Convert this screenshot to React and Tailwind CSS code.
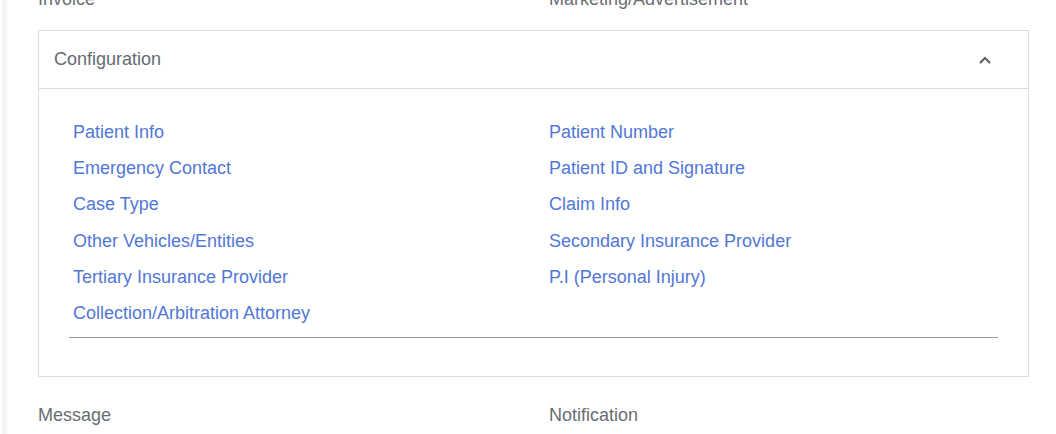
import React from "react";

const leftLinks = [
  "Patient Info",
  "Emergency Contact",
  "Case Type",
  "Other Vehicles/Entities",
  "Tertiary Insurance Provider",
  "Collection/Arbitration Attorney",
];

const rightLinks = [
  "Patient Number",
  "Patient ID and Signature",
  "Claim Info",
  "Secondary Insurance Provider",
  "P.I (Personal Injury)",
];

const App = () => {
  return (
    <div
      className="flex h-[434px] w-[1056px] overflow-hidden bg-white text-[18px]"
      style={{ fontFamily: '"Liberation Sans", Arial, sans-serif' }}
    >
      {/* left strip */}
      <div className="ml-[2px] w-[5px] shrink-0 bg-[#f4f4f6]" />

      <div className="flex-1 pl-[31px] pr-[27px]">
        {/* top labels */}
        <div className="-mt-[13px] grid h-[24px] grid-cols-[511px_1fr] leading-[24px] text-[#6a6d74]">
          <span>Invoice</span>
          <span>Marketing/Advertisement</span>
        </div>

        {/* Configuration accordion */}
        <div className="mt-[19px] border border-[#dedede]">
          <div className="flex h-[58px] items-center justify-between border-b border-[#dedede] pl-[15px] pr-[37px]">
            <span className="text-[#666a73]">Configuration</span>
            <svg width="12" height="8" viewBox="0 0 12 8" fill="none">
              <path
                d="M1.5 6.5 L6 2 L10.5 6.5"
                stroke="#5a5d64"
                strokeWidth="2"
                strokeLinecap="round"
              />
            </svg>
          </div>

          <div className="px-[30px] pb-[38px] pt-[25px]">
            <div className="grid grid-cols-[476px_1fr] pl-[4px]">
              <div className="flex flex-col">
                {leftLinks.map((l) => (
                  <a key={l} className="h-[36.2px] leading-[36px] text-[#5177d6]">
                    {l}
                  </a>
                ))}
              </div>
              <div className="flex flex-col">
                {rightLinks.map((l) => (
                  <a key={l} className="h-[36.2px] leading-[36px] text-[#5177d6]">
                    {l}
                  </a>
                ))}
              </div>
            </div>
            <div className="mt-[6px] h-px bg-[#9a9a9a]" />
          </div>
        </div>

        {/* bottom labels */}
        <div className="mt-[26px] grid h-[24px] grid-cols-[511px_1fr] leading-[24px] text-[#6a6d74]">
          <span>Message</span>
          <span>Notification</span>
        </div>
      </div>
    </div>
  );
};

export default App;
